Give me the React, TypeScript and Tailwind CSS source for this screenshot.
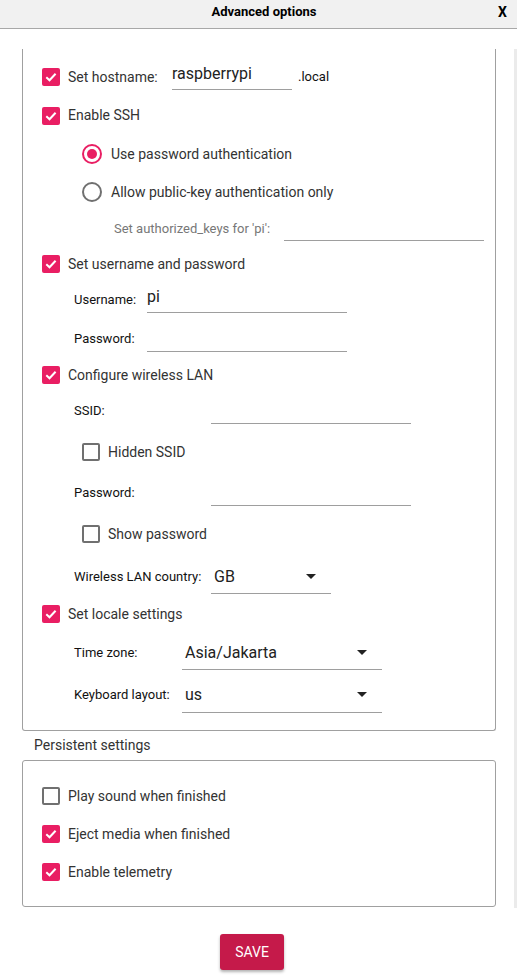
import React from 'react';

const Check = ({ on }: { on: boolean }) =>
  on ? (
    <span className="flex h-[18px] w-[18px] shrink-0 items-center justify-center rounded-[2px] bg-[#e91e63]">
      <svg width="14" height="14" viewBox="0 0 14 14">
        <path d="M2.3 7.3 L5.5 10.3 L11.6 3.7" fill="none" stroke="white" strokeWidth="2" />
      </svg>
    </span>
  ) : (
    <span className="h-[18px] w-[18px] shrink-0 rounded-[2px] border-2 border-[#707070] bg-white" />
  );

const Radio = ({ on }: { on: boolean }) =>
  on ? (
    <span className="flex h-[20px] w-[20px] shrink-0 items-center justify-center rounded-full border-2 border-[#e91e63]">
      <span className="h-[10px] w-[10px] rounded-full bg-[#e91e63]" />
    </span>
  ) : (
    <span className="h-[20px] w-[20px] shrink-0 rounded-full border-2 border-[#707070]" />
  );

const Arrow = () => (
  <svg width="10" height="5" viewBox="0 0 10 5" className="shrink-0">
    <path d="M0 0 L10 0 L5 5 Z" fill="#222" />
  </svg>
);

const CheckRow = ({ on, label, h }: { on: boolean; label: string; h: string }) => (
  <div className={`flex items-center pl-[19px] ${h}`}>
    <Check on={on} />
    <span className="ml-[8px] text-[14px] text-[#333]">{label}</span>
  </div>
);

const FieldRow = ({ label, value, h, lw }: { label: string; value?: string; h: string; lw: string }) => (
  <div className={`flex items-center pl-[51px] ${h}`}>
    <span className={`text-[13px] text-[#111] ${lw}`}>{label}</span>
    <div className="flex h-[26px] w-[200px] items-center border-b border-[#9e9e9e] pb-[6px] text-[16px] text-[#222]">
      {value}
    </div>
  </div>
);

const SelectRow = ({ label, value, h, lw, w }: { label: string; value: string; h: string; lw: string; w: string }) => (
  <div className={`flex items-center pl-[51px] ${h}`}>
    <span className={`text-[13px] text-[#111] ${lw}`}>{label}</span>
    <div className={`flex h-[34px] items-center justify-between border-b border-[#9e9e9e] pl-[3px] pr-[15px] text-[16px] text-[#222] ${w}`}>
      <span>{value}</span>
      <Arrow />
    </div>
  </div>
);

export default function App() {
  return (
    <div className="h-[975px] w-[517px] overflow-hidden bg-white font-['Roboto',sans-serif]">
      <div className="relative flex h-[29px] items-start justify-center border-b border-[#a8a8a8] bg-[#f1f1f1] pt-[2px]">
        <span className="pl-[11px] text-[13px] font-bold text-black">Advanced options</span>
        <span className="absolute right-[10px] top-[2px] text-[14px] font-bold text-black">X</span>
      </div>
      <div className="flex">
        <div className="w-[514px] pt-[20px]">
          <div className="ml-[22px] w-[474px] rounded-b-[3px] border-x border-b border-[#a0a0a0] pb-[17px] pt-[9px]">
            <div className="flex h-[38px] items-center pl-[19px]">
              <Check on />
              <span className="ml-[8px] w-[104px] text-[14px] text-[#333]">Set hostname:</span>
              <div className="flex h-[26px] w-[120px] items-center border-b border-[#9e9e9e] pb-[6px] text-[16px] text-[#222]">
                raspberrypi
              </div>
              <span className="ml-[6px] text-[13px] text-[#111]">.local</span>
            </div>
            <CheckRow on label="Enable SSH" h="h-[39px]" />
            <div className="flex h-[38px] items-center pl-[59px]">
              <Radio on />
              <span className="ml-[9px] text-[14px] text-[#333]">Use password authentication</span>
            </div>
            <div className="flex h-[38px] items-center pl-[59px]">
              <Radio on={false} />
              <span className="ml-[9px] text-[14px] text-[#333]">Allow public-key authentication only</span>
            </div>
            <div className="flex h-[36px] items-center pl-[91px]">
              <span className="w-[170px] text-[13px] text-[#777]">Set authorized_keys for 'pi':</span>
              <div className="h-[24px] w-[200px] border-b border-[#9e9e9e]" />
            </div>
            <CheckRow on label="Set username and password" h="h-[34px]" />
            <FieldRow label="Username:" value="pi" h="h-[38px]" lw="w-[73px]" />
            <FieldRow label="Password:" h="h-[40px]" lw="w-[73px]" />
            <CheckRow on label="Configure wireless LAN" h="h-[32px]" />
            <FieldRow label="SSID:" h="h-[40px]" lw="w-[137px]" />
            <div className="flex h-[42px] items-center pl-[59px]">
              <Check on={false} />
              <span className="ml-[8px] text-[14px] text-[#333]">Hidden SSID</span>
            </div>
            <FieldRow label="Password:" h="h-[40px]" lw="w-[137px]" />
            <div className="flex h-[42px] items-center pl-[59px]">
              <Check on={false} />
              <span className="ml-[8px] text-[14px] text-[#333]">Show password</span>
            </div>
            <SelectRow label="Wireless LAN country:" value="GB" h="h-[44px]" lw="w-[137px]" w="w-[120px]" />
            <CheckRow on label="Set locale settings" h="h-[30px]" />
            <SelectRow label="Time zone:" value="Asia/Jakarta" h="h-[48px]" lw="w-[108px]" w="w-[200px]" />
            <div className="flex h-[36px] items-center pl-[51px]">
              <span className="w-[108px] text-[13px] text-[#111]">Keyboard layout:</span>
              <div className="flex h-[36px] w-[200px] items-center justify-between border-b border-[#9e9e9e] pl-[3px] pr-[15px] text-[16px] text-[#222]">
                <span>us</span>
                <Arrow />
              </div>
            </div>
          </div>
          <div className="flex h-[29px] items-center pl-[34px] text-[14px] text-[#333]">Persistent settings</div>
          <div className="ml-[22px] w-[474px] rounded-[3px] border border-[#a0a0a0] pb-[15px] pt-[16px]">
            <CheckRow on={false} label="Play sound when finished" h="h-[38px]" />
            <CheckRow on label="Eject media when finished" h="h-[38px]" />
            <CheckRow on label="Enable telemetry" h="h-[38px]" />
          </div>
          <button className="ml-[220px] mt-[27px] flex h-[36px] w-[64px] items-center justify-center rounded-[3px] bg-[#c51a4a] text-[14px] text-white shadow-[0_2px_3px_rgba(0,0,0,0.3)]">
            SAVE
          </button>
        </div>
        <div className="mt-[20px] h-[859px] w-[3px] bg-[#ebebeb]" />
      </div>
    </div>
  );
}
